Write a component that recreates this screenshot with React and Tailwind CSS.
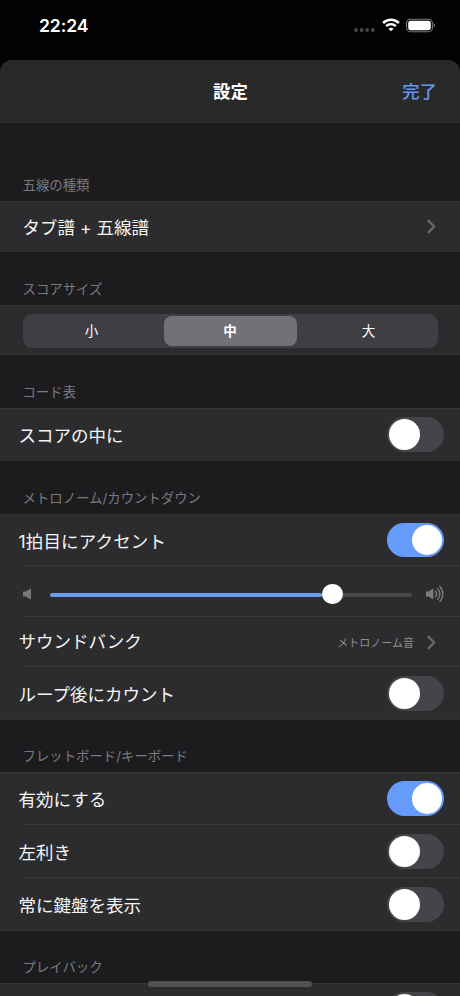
import { useState } from 'react';
import clsx from 'clsx';

const sizes = ['小', '中', '大'];

function Toggle({ defaultOn = false }) {
  const [on, setOn] = useState(defaultOn);

  return (
    <button
      type="button"
      role="switch"
      aria-checked={on}
      onClick={() => setOn(!on)}
      className={clsx(
        'flex h-[34.5px] w-[57px] shrink-0 items-center rounded-full px-[2px]',
        on ? 'justify-end bg-[#659bfb]' : 'bg-[#454549]'
      )}
    >
      <span className="size-[30.5px] rounded-full bg-white" />
    </button>
  );
}

function Chevron() {
  return (
    <svg className="h-[15px] w-[9px] shrink-0" viewBox="0 0 9 15" fill="none">
      <path d="M1.6 1.8 7.2 7.5 1.6 13.2" stroke="#69696c" strokeWidth="2.4" strokeLinecap="round" strokeLinejoin="round" />
    </svg>
  );
}

function Section({ title, className, children }) {
  return (
    <section>
      <h2 className={clsx('flex items-end pb-[6px] pl-[22.5px] text-[13.4px] leading-5 text-[#7a7a7e]', className)}>
        {title}
      </h2>
      <div className="bg-[#2c2c2e] shadow-[inset_0_1px_0_#353537,inset_0_-1px_0_#303032]">{children}</div>
    </section>
  );
}

function Row({ label, className, labelClass = 'pt-[2px]', children }) {
  return (
    <div className={clsx('flex items-center justify-between pr-4 pl-[18.5px]', className)}>
      <span className={clsx('text-[17.5px] leading-6 text-[#f4f4f5]', labelClass)}>{label}</span>
      {children}
    </div>
  );
}

function Divider() {
  return <div className="-mt-px ml-6 h-px bg-[#39393b]" />;
}

function StatusBar() {
  return (
    <div className="flex h-[60px] shrink-0 items-start justify-between pt-[14px] pr-[24px] pl-[39px]">
      <span className="text-[17.6px] leading-6 font-semibold tracking-[-0.1px] text-white">22:24</span>
      <div className="flex h-6 items-center">
        <svg className="mt-[7px] h-1 w-[21px]" viewBox="0 0 21 4" fill="#48484a">
          <circle cx="2" cy="2" r="1.9" />
          <circle cx="7.6" cy="2" r="1.9" />
          <circle cx="13.2" cy="2" r="1.9" />
          <circle cx="18.8" cy="2" r="1.9" />
        </svg>
        <svg className="mr-[6.5px] ml-[6.5px] h-[13.5px] w-[18px] -translate-y-px" viewBox="0 0 18 13.5" fill="none" stroke="white">
          <path d="M1.1 5C5.5.7 12.5.7 16.9 5" strokeWidth="2.5" />
          <path d="M4.1 8.1C6.9 5.5 11.1 5.5 13.9 8.1" strokeWidth="2.4" />
          <path d="M9 13.3 6.4 10.8C7.9 9.4 10.1 9.4 11.6 10.8Z" fill="white" stroke="none" />
        </svg>
        <svg className="h-[14px] w-[30px] -translate-y-[0.5px]" viewBox="0 0 30 14">
          <rect x="0.6" y="0.6" width="25.8" height="12.8" rx="4" fill="none" stroke="#78787a" strokeWidth="1.1" />
          <rect x="2.2" y="2.2" width="22.6" height="9.6" rx="2.4" fill="white" />
          <path d="M27.6 4.8c1.8.6 1.8 3.8 0 4.4z" fill="#78787a" />
        </svg>
      </div>
    </div>
  );
}

function SizePicker() {
  const [size, setSize] = useState('中');

  return (
    <div className="flex h-[50px] items-center px-[22.5px] pt-[2px]">
      <div className="grid h-[33.5px] w-full grid-cols-[138px_139px_138px] rounded-[9px] bg-[#3f3f43] py-[2px]">
        {sizes.map((s) => (
          <button
            key={s}
            type="button"
            onClick={() => setSize(s)}
            className={clsx(
              'mx-[3px] flex items-center justify-center rounded-[8px] text-[13.5px] text-white',
              s === size && 'bg-[#717177] font-bold'
            )}
          >
            {s}
          </button>
        ))}
      </div>
    </div>
  );
}

function VolumeSlider() {
  const [volume] = useState(78.2);

  return (
    <div className="flex h-[51px] items-center pr-4 pl-[23px] pt-[5px]">
      <svg className="h-3 w-[9px]" viewBox="0 0 9 12" fill="#78787b">
        <path d="M0 3.6h2.6L8 .4v11.2L2.6 8.4H0z" />
      </svg>
      <div className="ml-[18px] flex h-5 flex-1 items-center pt-px">
        <div className="flex h-[4px] w-full items-center rounded-full bg-[#48484b]">
          <div className="h-[4px] rounded-full bg-[#6b9bec]" style={{ width: `${volume - 3}%` }} />
          <div className="-mt-px -mr-5 size-[20.5px] rounded-full bg-white" />
        </div>
      </div>
      <svg className="ml-[14px] h-[18px] w-[18px]" viewBox="0 0 18 18" fill="none" stroke="#7c7c7f" strokeWidth="1.4" strokeLinecap="round">
        <path d="M0 6.6h2.6L7.4 3.4v11.2L2.6 11.4H0z" fill="#7c7c7f" stroke="none" />
        <path d="M9.4 6.3c1.5 1.6 1.5 3.8 0 5.4" />
        <path d="M11.6 3.8c3 2.9 3 7.5 0 10.4" />
        <path d="M13.8 1.5c4 4.2 4 10.8 0 15" />
      </svg>
    </div>
  );
}

export default function App() {
  return (
    <div className="relative flex h-[996px] w-[460px] flex-col overflow-hidden bg-[#010201] font-['Inter','Noto_Sans_CJK_JP',sans-serif]">
      <StatusBar />

      <main className="flex-1 overflow-hidden rounded-t-[12px] bg-[#1c1c1e]">
        {/* Navigation bar */}
        <header className="grid h-[63px] grid-cols-3 items-center border-b border-[#333335] bg-[#292929] pr-[23px] pl-6 pt-[2px]">
          <span />
          <h1 className="text-center text-[17.4px] font-bold text-white">設定</h1>
          <button type="button" className="text-right text-[17.4px] font-medium text-[#6399f5]">完了</button>
        </header>

        <Section title="五線の種類" className="h-[78px]">
          <div className="flex h-[51px] items-center justify-between pr-6 pl-[22.5px]">
            <span className="pt-[2px] text-[17.5px] leading-6 text-[#f4f4f5]">タブ譜 + 五線譜</span>
            <Chevron />
          </div>
        </Section>

        <Section title="スコアサイズ" className="h-[53px]">
          <SizePicker />
        </Section>

        <Section title="コード表" className="h-[53px]">
          <Row label="スコアの中に" className="h-[53px]">
            <Toggle />
          </Row>
        </Section>

        <Section title="メトロノーム/カウントダウン" className="h-[53px]">
          <Row label="1拍目にアクセント" className="h-[52px]" labelClass="pt-[3px] tracking-[0.15px]">
            <Toggle defaultOn />
          </Row>
          <Divider />
          <VolumeSlider />
          <Divider />
          <Row label="サウンドバンク" className="h-[50px]" labelClass="pb-px">
            <span className="flex items-center gap-[13px] pr-2 text-[11px] text-[#8e8e92]">
              <span className="pt-[2px]">メトロノーム音</span>
              <Chevron />
            </span>
          </Row>
          <Divider />
          <Row label="ループ後にカウント" className="h-[53px]">
            <Toggle />
          </Row>
        </Section>

        <Section title="フレットボード/キーボード" className="h-[52px]">
          <Row label="有効にする" className="h-[53px]" labelClass="pt-[3px]">
            <Toggle defaultOn />
          </Row>
          <Divider />
          <Row label="左利き" className="h-[53px]">
            <Toggle />
          </Row>
          <Divider />
          <Row label="常に鍵盤を表示" className="h-[53px]">
            <Toggle />
          </Row>
        </Section>

        <Section title="プレイバック" className="h-[52px]">
          <Row label="" className="h-[53px]">
            <Toggle />
          </Row>
        </Section>
      </main>

      {/* Home indicator */}
      <div className="absolute bottom-[9px] left-[148px] h-[6px] w-[164px] rounded-full bg-[#525254]" />
    </div>
  );
}
